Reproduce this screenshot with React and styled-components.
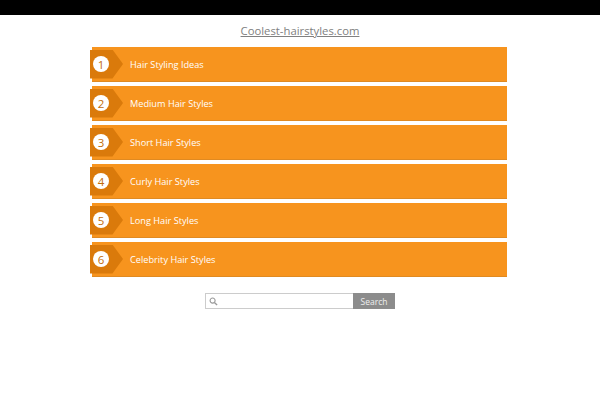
import styled, { createGlobalStyle } from "styled-components";

const GlobalStyle = createGlobalStyle`
  body {
    margin: 0;
    background: #fff;
    font-family: "Open Sans", "Liberation Sans", sans-serif;
  }
`;

const items = [
  "Hair Styling Ideas",
  "Medium Hair Styles",
  "Short Hair Styles",
  "Curly Hair Styles",
  "Long Hair Styles",
  "Celebrity Hair Styles",
];

const App = () => {
  return (
    <Wrapper>
      <GlobalStyle />
      <TopBar />
      <Title href="#">Coolest-hairstyles.com</Title>
      <List>
        {items.map((label, i) => (
          <Row key={label}>
            <Badge>
              <Num>{i + 1}</Num>
            </Badge>
            <Label>{label}</Label>
          </Row>
        ))}
      </List>
      <SearchForm onSubmit={(e) => e.preventDefault()}>
        <SearchBox>
          <svg width="9" height="9" viewBox="0 0 10 10">
            <circle cx="4" cy="4" r="2.8" fill="none" stroke="#999" strokeWidth="1.2" />
            <line x1="6" y1="6" x2="9" y2="9" stroke="#999" strokeWidth="1.5" />
          </svg>
          <input type="text" />
        </SearchBox>
        <SearchButton type="submit">Search</SearchButton>
      </SearchForm>
    </Wrapper>
  );
};

export default App;

const Wrapper = styled.div`
  display: flex;
  flex-direction: column;
  align-items: center;
`;

const TopBar = styled.div`
  width: 100%;
  height: 15px;
  background: #000;
`;

const Title = styled.a`
  margin-top: 8px;
  font-size: 11.3px;
  color: #808080;
  text-decoration: underline;
  line-height: 15px;
`;

const List = styled.div`
  margin-top: 9px;
  margin-right: 3px;
  width: 417px;
  box-sizing: border-box;
  display: flex;
  flex-direction: column;
  gap: 5px;
  padding-left: 2px;
`;

const Row = styled.div`
  height: 34px;
  background: #f7941e;
  box-shadow: 0 1px 0 #e08a22;
  display: flex;
  align-items: center;
`;

const Badge = styled.div`
  width: 33px;
  height: 29px;
  margin-left: -2px;
  background: #da7a0b;
  clip-path: polygon(0 0, 68% 0, 100% 50%, 68% 100%, 0 100%);
  display: flex;
  align-items: center;
  padding-left: 3px;
  box-sizing: border-box;
`;

const Num = styled.span`
  width: 16px;
  height: 16px;
  border-radius: 50%;
  background: #fff;
  color: #c26d0c;
  font-size: 11.5px;
  display: flex;
  align-items: center;
  justify-content: center;
`;

const Label = styled.span`
  margin-left: 7px;
  color: #fff;
  font-size: 9.2px;
`;

const SearchForm = styled.form`
  margin-top: 17px;
  display: flex;
  height: 16px;
`;

const SearchBox = styled.div`
  width: 144px;
  border: 1px solid #ccc;
  border-right: none;
  display: flex;
  align-items: center;
  padding-left: 3px;
  background: #fff;

  input {
    border: none;
    outline: none;
    width: 120px;
    height: 12px;
    padding: 0 3px;
  }
`;

const SearchButton = styled.button`
  width: 42px;
  height: 16px;
  border: none;
  background: #8c8c8c;
  color: #eee;
  font-family: "Open Sans", sans-serif;
  font-size: 8.5px;
  padding: 0;
`;
